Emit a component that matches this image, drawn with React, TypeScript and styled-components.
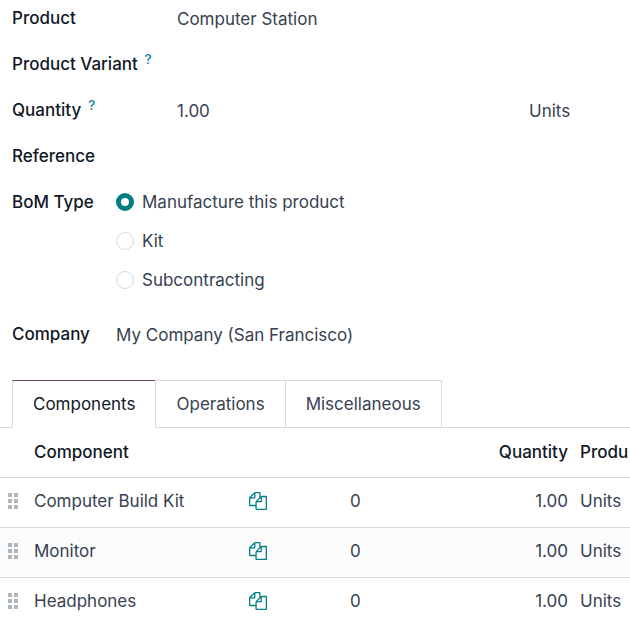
import React, { useState } from "react";
import styled, { createGlobalStyle } from "styled-components";

const ink = "#111827";
const body = "#374151";
const line = "#d8dadd";
const teal = "#017e84";

const GlobalStyle = createGlobalStyle`
  * { box-sizing: border-box; }
  body {
    margin: 0;
    background: #fff;
    color: ${body};
    font: 400 17px/24px Inter, "Liberation Sans", sans-serif;
    overflow-x: hidden;
  }
`;

const Page = styled.main`
  overflow: hidden;
`;

const Form = styled.form`
  display: flex;
  flex-direction: column;
  gap: 22px;
  padding: 6px 12px 0;
`;

const Field = styled.div<{ $labelWidth: number }>`
  display: grid;
  grid-template-columns: ${(p) => p.$labelWidth}px minmax(0, 1fr);
  align-items: start;
`;

const Label = styled.label`
  color: ${ink};
  font-weight: 500;
  white-space: nowrap;
`;

const Help = styled.sup`
  margin-left: 7px;
  color: #0180a5;
  font-size: 13px;
  line-height: 0;
  vertical-align: 6px;
`;

const Input = styled.input`
  width: 100%;
  min-width: 0;
  height: 24px;
  margin: 0;
  padding: 2px 0 0;
  border: 0;
  outline: 0;
  background: transparent;
  color: inherit;
  font: inherit;
`;

const Amount = styled.div`
  display: grid;
  grid-template-columns: minmax(0, 352fr) minmax(0, 89fr);
`;

const RadioField = styled.fieldset`
  display: grid;
  grid-template-columns: 104px minmax(0, 1fr);
  margin: 0;
  padding: 0;
  border: 0;
`;

const Options = styled.div`
  display: flex;
  flex-direction: column;
  gap: 15px;
  margin-bottom: 8px;
`;

const Option = styled.label`
  display: flex;
  align-items: center;
  gap: 8px;
`;

const Radio = styled.input`
  appearance: none;
  width: 18px;
  height: 18px;
  margin: 0;
  border: 1px solid ${line};
  border-radius: 50%;
  background: #fff;

  &:checked {
    border: 5px solid ${teal};
  }
`;

const TabBar = styled.div`
  display: flex;
  margin-top: 34px;
  padding-left: 12px;
  box-shadow: inset 0 -1px ${line};
`;

const Tab = styled.button<{ $active: boolean }>`
  height: 48px;
  margin: 0 0 0 -1px;
  padding: 0 20px;
  border: 1px solid ${line};
  border-top-color: ${(p) => (p.$active ? "#714b67" : line)};
  border-bottom-color: ${(p) => (p.$active ? "#fff" : line)};
  background: #fff;
  color: ${(p) => (p.$active ? ink : body)};
  font: inherit;

  &:first-child {
    margin-left: 0;
  }
`;

const Table = styled.table`
  width: 100%;
  table-layout: fixed;
  border-collapse: collapse;
`;

const HandleCol = styled.col`
  width: 28px;
`;

const CopyCol = styled.col`
  width: 16%;
`;

const CountCol = styled.col`
  width: 17%;
`;

const QuantityCol = styled.col`
  width: 123px;
`;

const UnitCol = styled.col`
  width: 56px;
`;

const Row = styled.tr`
  height: 50px;
  border-bottom: 1px solid ${line};

  tbody &:nth-child(even) {
    background: #fcfcfc;
  }
`;

const HeadRow = styled.tr`
  height: 49px;
  border-bottom: 1px solid ${line};
`;

const Head = styled.th<{ $right?: boolean }>`
  padding: 0 6px;
  color: ${ink};
  font-weight: 500;
  text-align: ${(p) => (p.$right ? "right" : "left")};
  white-space: nowrap;
`;

const Cell = styled.td<{ $right?: boolean }>`
  padding: 0 6px 2px;
  text-align: ${(p) => (p.$right ? "right" : "left")};
  white-space: nowrap;
`;

const IconButton = styled.button`
  display: block;
  margin: 0;
  padding: 0;
  border: 0;
  background: transparent;
  color: ${teal};

  svg {
    display: block;
  }
`;

const HandleButton = styled(IconButton)`
  padding-left: 2px;
  color: #adb5bd;
`;

function CopyIcon() {
  return (
    <svg width="18" height="18" viewBox="0 0 1792 1792" fill="currentColor" aria-hidden="true">
      <path d="M1696 384q40 0 68 28t28 68v1216q0 40-28 68t-68 28h-960q-40 0-68-28t-28-68v-288h-544q-40 0-68-28t-28-68v-672q0-40 20-88t48-76l408-408q28-28 76-48t88-20h416q40 0 68 28t28 68v328q68-40 128-40h416zm-544 213l-299 299h299v-299zm-640-384l-299 299h299v-299zm196 647l316-316v-416h-384v416q0 40-28 68t-68 28h-416v640h512v-256q0-40 20-88t48-76zm956 804v-1152h-384v416q0 40-28 68t-68 28h-416v640h896z" />
    </svg>
  );
}

function HandleIcon() {
  return (
    <svg width="10" height="16" viewBox="0 0 10 16" fill="currentColor" aria-hidden="true">
      {[0, 6, 12].map((y) => (
        <path key={y} d={`M0 ${y}h4v4h-4zM6 ${y}h4v4h-4z`} />
      ))}
    </svg>
  );
}

const types = ["Manufacture this product", "Kit", "Subcontracting"];
const tabs = ["Components", "Operations", "Miscellaneous"];
const components = ["Computer Build Kit", "Monitor", "Headphones"];

export default function App() {
  const [type, setType] = useState(types[0]);
  const [tab, setTab] = useState(tabs[0]);

  return (
    <Page>
      <GlobalStyle />
      <Form>
        <Field $labelWidth={165}>
          <Label htmlFor="product">Product</Label>
          <Input id="product" defaultValue="Computer Station" />
        </Field>
        <Field $labelWidth={165}>
          <Label htmlFor="variant">
            Product Variant<Help>?</Help>
          </Label>
          <Input id="variant" />
        </Field>
        <Field $labelWidth={165}>
          <Label htmlFor="quantity">
            Quantity<Help>?</Help>
          </Label>
          <Amount>
            <Input id="quantity" defaultValue="1.00" />
            <Input aria-label="Unit of measure" defaultValue="Units" />
          </Amount>
        </Field>
        <Field $labelWidth={104}>
          <Label htmlFor="reference">Reference</Label>
          <Input id="reference" />
        </Field>
        <RadioField aria-labelledby="bom-type">
          <Label as="span" id="bom-type">
            BoM Type
          </Label>
          <Options>
            {types.map((name) => (
              <Option key={name}>
                <Radio type="radio" name="type" checked={type === name} onChange={() => setType(name)} />
                {name}
              </Option>
            ))}
          </Options>
        </RadioField>
        <Field $labelWidth={104}>
          <Label htmlFor="company">Company</Label>
          <Input id="company" defaultValue="My Company (San Francisco)" />
        </Field>
      </Form>

      <TabBar role="tablist">
        {tabs.map((name) => (
          <Tab
            key={name}
            type="button"
            role="tab"
            aria-selected={tab === name}
            $active={tab === name}
            onClick={() => setTab(name)}
          >
            {name}
          </Tab>
        ))}
      </TabBar>

      <Table>
        <colgroup>
          <HandleCol />
          <col />
          <CopyCol />
          <CountCol />
          <QuantityCol />
          <UnitCol />
        </colgroup>
        <thead>
          <HeadRow>
            <Head />
            <Head>Component</Head>
            <Head />
            <Head />
            <Head $right>Quantity</Head>
            <Head>Produ</Head>
          </HeadRow>
        </thead>
        <tbody>
          {components.map((name) => (
            <Row key={name}>
              <Cell>
                <HandleButton type="button" aria-label={`Move ${name}`}>
                  <HandleIcon />
                </HandleButton>
              </Cell>
              <Cell>{name}</Cell>
              <Cell>
                <IconButton type="button" aria-label={`Copy ${name}`}>
                  <CopyIcon />
                </IconButton>
              </Cell>
              <Cell>0</Cell>
              <Cell $right>1.00</Cell>
              <Cell>Units</Cell>
            </Row>
          ))}
        </tbody>
      </Table>
    </Page>
  );
}
